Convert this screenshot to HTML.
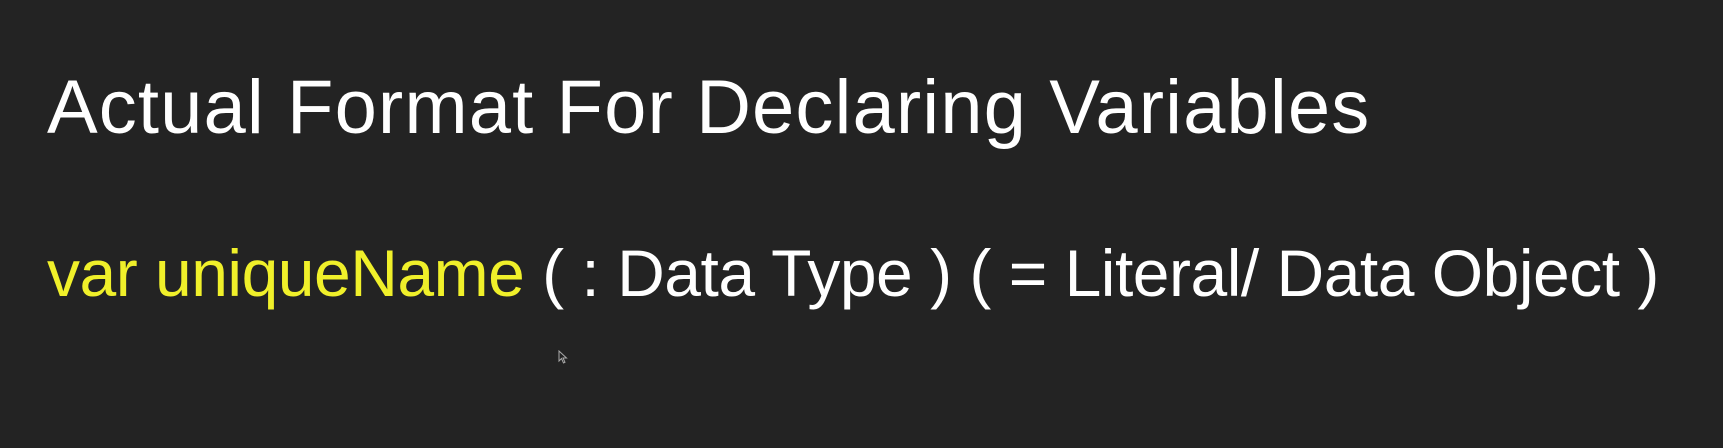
<!DOCTYPE html>
<html><head><meta charset="utf-8"><style>
html,body{margin:0;padding:0;background:#232323;width:1723px;height:448px;overflow:hidden;}
.t{position:absolute;left:47px;white-space:nowrap;font-family:"Liberation Sans",sans-serif;color:#fff;}
#a{top:58px;font-size:76px;line-height:100px;letter-spacing:1.1px;}
#b{top:228px;font-size:66px;line-height:90px;letter-spacing:-0.5px;}
.y{color:#f0f02a;}
</style></head><body>
<div class="t" id="a">Actual Format For Declaring Variables</div>
<div class="t" id="b"><span class="y">var uniqueName</span> ( : Data Type ) ( = Literal/ Data Object )</div>
<svg style="position:absolute;left:558px;top:350px" width="12" height="14" viewBox="0 0 12 14"><path d="M1 1 L1 11 L3.5 8.5 L5.5 13 L7 12.3 L5 8 L8.5 8 Z" fill="#222" stroke="#aaa" stroke-width="1"/></svg>
</body></html>
